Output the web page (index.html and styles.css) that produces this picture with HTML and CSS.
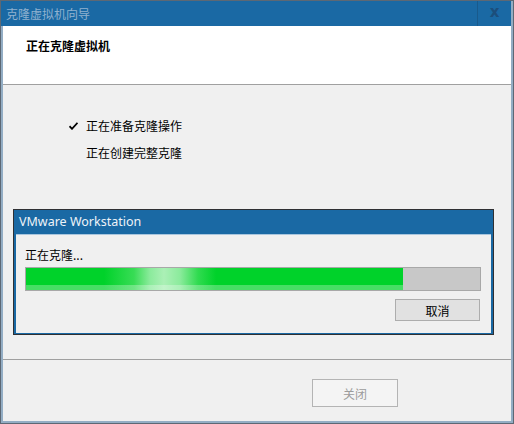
FILE: index.html
```html
<!DOCTYPE html>
<html lang="zh-CN">
<head>
  <meta charset="UTF-8">
  <title>克隆虚拟机向导</title>
  <link rel="stylesheet" href="styles.css">
</head>
<body>
  <div class="window">
    <div class="titlebar">
      <span class="title">克隆虚拟机向导</span>
      <span class="close-box">x</span>
    </div>

    <div class="client">
      <div class="header">
        <h1>正在克隆虚拟机</h1>
      </div>

      <div class="content">
        <ul class="steps">
          <li class="done">
            <span class="check">
              <svg width="9" height="8" viewBox="0 0 9 8"><path d="M0.5 4.2 L3 6.8 L8.5 0.8" fill="none" stroke="#000" stroke-width="1.8"/></svg>
            </span>
            正在准备克隆操作
          </li>
          <li><span class="check"></span>正在创建完整克隆</li>
        </ul>

        <!-- fenêtre de progression -->
        <div class="progress-dialog">
          <div class="dlg-title">VMware Workstation</div>
          <div class="dlg-body">
            <div class="status">正在克隆...</div>
            <div class="progress">
              <div class="progress-fill" style="width: 83%"></div>
            </div>
            <div class="dlg-actions">
              <button class="btn">取消</button>
            </div>
          </div>
        </div>
      </div>

      <div class="footer">
        <button class="btn btn-close" disabled>关闭</button>
      </div>
    </div>
  </div>
</body>
</html>
```

FILE: styles.css
```css
html, body {
  margin: 0;
  padding: 0;
  background-color: #f0f0f0;
  font-family: "Noto Sans CJK SC", "Noto Sans", sans-serif;
  font-size: 12px;
  color: #000;
}

.window {
  box-sizing: border-box;
  width: 514px;
  height: 424px;
  border: 1px solid #5d6874;
  background-color: #93adc4;
  padding: 0 2px 2px 0;
  display: flex;
  flex-direction: column;
}

.titlebar {
  height: 25px;
  background-color: #1a69a4;
  display: flex;
  align-items: center;
  flex-shrink: 0;
}

.title {
  flex: 1;
  padding-left: 5px;
  color: #8fb1cf;
  font-size: 12px;
  line-height: 25px;
}

.close-box {
  width: 33px;
  height: 25px;
  border-left: 1px solid #195a8c;
  color: #1c4e7b;
  font-family: "DejaVu Sans", sans-serif;
  font-weight: bold;
  font-size: 15px;
  line-height: 23px;
  text-align: center;
}

.client {
  flex: 1;
  margin-left: 2px;
  background-color: #f0f0f0;
  display: flex;
  flex-direction: column;
}

.header {
  height: 58px;
  background-color: #fff;
  border-bottom: 1px solid #a0a0a0;
  flex-shrink: 0;
}

.header h1 {
  margin: 0;
  padding: 12px 0 0 23px;
  font-size: 12px;
  font-weight: bold;
  line-height: 16px;
}

.content {
  flex: 1;
  padding-top: 33px;
  border-bottom: 1px solid #a0a0a0;
}

.steps {
  list-style: none;
  margin: 0 0 0 66px;
  padding: 0;
}

.steps li {
  display: flex;
  align-items: center;
  line-height: 16px;
  margin-bottom: 11px;
}

.check {
  width: 17px;
  display: flex;
  align-items: center;
}

.progress-dialog {
  margin: 48px 0 0 10px;
  width: 481px;
  border: 1px solid #2f3033;
  background-color: #1a69a4;
  padding: 0 2px 1px 1px;
  box-sizing: border-box;
}

.dlg-title {
  height: 24px;
  line-height: 24px;
  padding-left: 4px;
  color: #eef3f8;
  font-family: "Noto Sans", sans-serif;
  font-size: 12.5px;
}

.dlg-body {
  margin-left: 1px;
  background-color: #f0f0f0;
  border-top: 1px solid #a9c6de;
  padding: 12px 10px 12px 9px;
}

.status {
  line-height: 16px;
}

.progress {
  margin-top: 4px;
  height: 22px;
  border: 1px solid #a8a8a8;
  background-color: #c8c8c8;
}

.progress-fill {
  height: 100%;
  background:
    linear-gradient(to bottom, transparent 78%, rgba(255, 255, 255, 0.28) 78%),
    linear-gradient(90deg, #00d22a 0, #00d22a 78px, #38dc55 108px, #8beb9c 124px, #abf0b6 138px, #8beb9c 154px, #30db50 172px, #00d22a 190px, #00d22a 100%);
}

.dlg-actions {
  display: flex;
  justify-content: flex-end;
  margin-top: 8px;
  margin-right: 1px;
}

.btn {
  font-family: "Noto Sans CJK SC", sans-serif;
  font-size: 12px;
  width: 85px;
  height: 22px;
  padding: 0;
  border: 1px solid #adadad;
  background-color: #e1e1e1;
  color: #000;
}

.footer {
  height: 61px;
  flex-shrink: 0;
  display: flex;
  justify-content: flex-end;
  align-items: flex-start;
  padding: 19px 113px 0 0;
  box-sizing: border-box;
}

.btn-close {
  width: 86px;
  height: 28px;
  border-color: #b4b4b4;
  background-color: #f4f4f4;
  color: #9c9c9c;
}
```
